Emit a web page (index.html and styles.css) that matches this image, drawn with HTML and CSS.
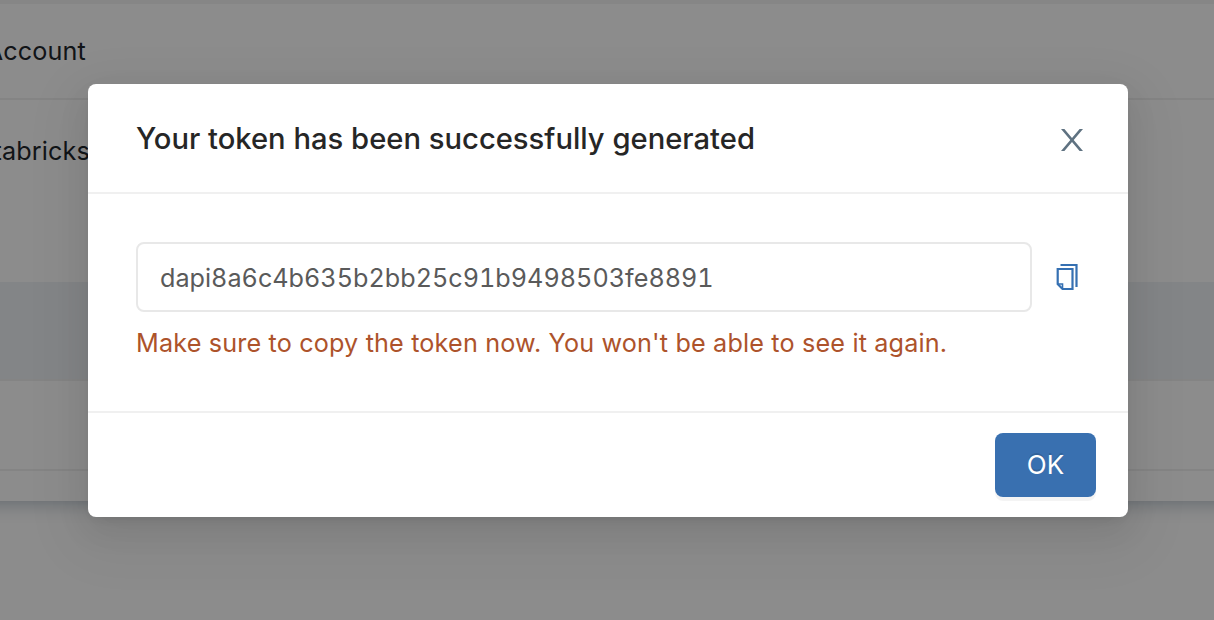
FILE: index.html
```html
<!DOCTYPE html>
<html lang="en">
<head>
    <meta charset="UTF-8">
    <meta name="viewport" content="width=device-width, initial-scale=1.0">
    <title>Access Tokens</title>
    <link rel="stylesheet" href="styles.css">
</head>
<body>
    <div class="page">
        <div class="panel">
            <div class="row"><span class="cell">Account</span></div>
            <div class="row row-tall"><span class="cell cell-wide">Databricks</span></div>
            <div class="row row-active"></div>
            <div class="row row-short"></div>
        </div>
    </div>

    <div class="overlay">
        <div class="modal" role="dialog" aria-labelledby="modal-title">
            <div class="modal-header">
                <h1 id="modal-title">Your token has been successfully generated</h1>
                <button type="button" class="close-btn" aria-label="Close">
                    <svg width="24" height="24" viewBox="0 0 24 24">
                        <path d="M1 1H4.4L12 9.9 19.6 1H23L13.7 12 23 23H19.6L12 14.1 4.4 23H1L10.3 12Z" fill="#5f7281"/>
                    </svg>
                </button>
            </div>
            <div class="modal-body">
                <div class="token-row">
                    <div class="token-input">dapi8a6c4b635b2bb25c91b9498503fe8891</div>
                    <button type="button" class="copy-btn" aria-label="Copy">
                        <svg width="24" height="28" viewBox="0 0 24 28" fill="none" stroke="#3570b2" stroke-width="2.2">
                            <path d="M5.5 2H21.5V24"/>
                            <path d="M2.7 6H17.5V26H7.5L2.7 21Z"/>
                            <path d="M2.7 21H7.5V26" stroke-width="1.6"/>
                        </svg>
                    </button>
                </div>
                <p class="warning">Make sure to copy the token now. You won't be able to see it again.</p>
            </div>
            <div class="modal-footer">
                <button type="button" class="ok-btn">OK</button>
            </div>
        </div>
    </div>
</body>
</html>
```

FILE: styles.css
```css
* {
    box-sizing: border-box;
}

body {
    margin: 0;
    height: 620px;
    overflow: hidden;
    background-color: white;
    font-family: Inter, "Liberation Sans", sans-serif;
    font-size: 25.2px;
}

button {
    padding: 0;
    border: none;
    background: none;
    font-family: inherit;
    cursor: pointer;
}

/* Token list behind the dialog */
.panel {
    height: 501px;
    margin: 0 -40px;
    padding: 0 40px;
    border-top: 4px solid #f5f5f5;
    box-shadow: 0 4px 16px rgba(40, 70, 100, 0.3);
}

.row {
    height: 96px;
    margin: 0 -40px;
    padding: 0 40px;
    border-bottom: 2px solid #f0f0f0;
    color: #1f272d;
}

.row-tall {
    height: 182px;
    border-bottom: none;
}

.row-active {
    height: 99px;
    background-color: #eff3f6;
}

.row-short {
    height: 90px;
}

.cell {
    display: flex;
    justify-content: flex-end;
    width: 86px;
    line-height: 32px;
    padding-top: 31px;
    white-space: nowrap;
    letter-spacing: 0.15px;
}

.cell-wide {
    width: 90px;
    padding-top: 35px;
}

/* Dialog */
.overlay {
    position: absolute;
    inset: 0;
    padding: 84px 86px 0 88px;
    background-color: rgba(0, 0, 0, 0.45);
}

.modal {
    height: 433px;
    background-color: white;
    border-radius: 8px;
    box-shadow: 0 6px 12px -8px rgba(0, 0, 0, 0.12), 0 12px 32px rgba(0, 0, 0, 0.08), 0 18px 56px 16px rgba(0, 0, 0, 0.05);
}

.modal-header {
    display: flex;
    justify-content: space-between;
    align-items: center;
    height: 110px;
    padding: 0 44px 0 48px;
    border-bottom: 2px solid #f0f0f0;
}

h1 {
    margin: 1px 0 0;
    font-size: 29.2px;
    font-weight: 500;
    line-height: 36px;
    color: #262626;
}

.close-btn {
    height: 24px;
    margin-top: 3px;
}

.modal-body {
    height: 217px;
    padding: 48px 48px 0;
}

.token-row {
    display: flex;
    align-items: center;
    gap: 23px;
}

.token-input {
    width: 896px;
    height: 70px;
    padding: 0 22px;
    border: 2px solid #e8e8e8;
    border-radius: 8px;
    line-height: 68px;
    font-variant-numeric: tabular-nums;
    color: #5a5a5a;
}

.copy-btn {
    height: 28px;
}

svg {
    display: block;
}

.warning {
    margin: 15px 0 0;
    line-height: 32px;
    letter-spacing: 0.16px;
    color: #ad532b;
}

.modal-footer {
    display: flex;
    justify-content: flex-end;
    height: 106px;
    padding: 20px 32px;
    border-top: 2px solid #f0f0f0;
}

.ok-btn {
    width: 101px;
    height: 64px;
    border-radius: 8px;
    background-color: #3970b0;
    box-shadow: 0 4px 0 rgba(0, 0, 0, 0.045);
    color: white;
    font-size: 26px;
    line-height: 64px;
    text-shadow: 0 -2px 0 rgba(0, 0, 0, 0.12);
}
```
